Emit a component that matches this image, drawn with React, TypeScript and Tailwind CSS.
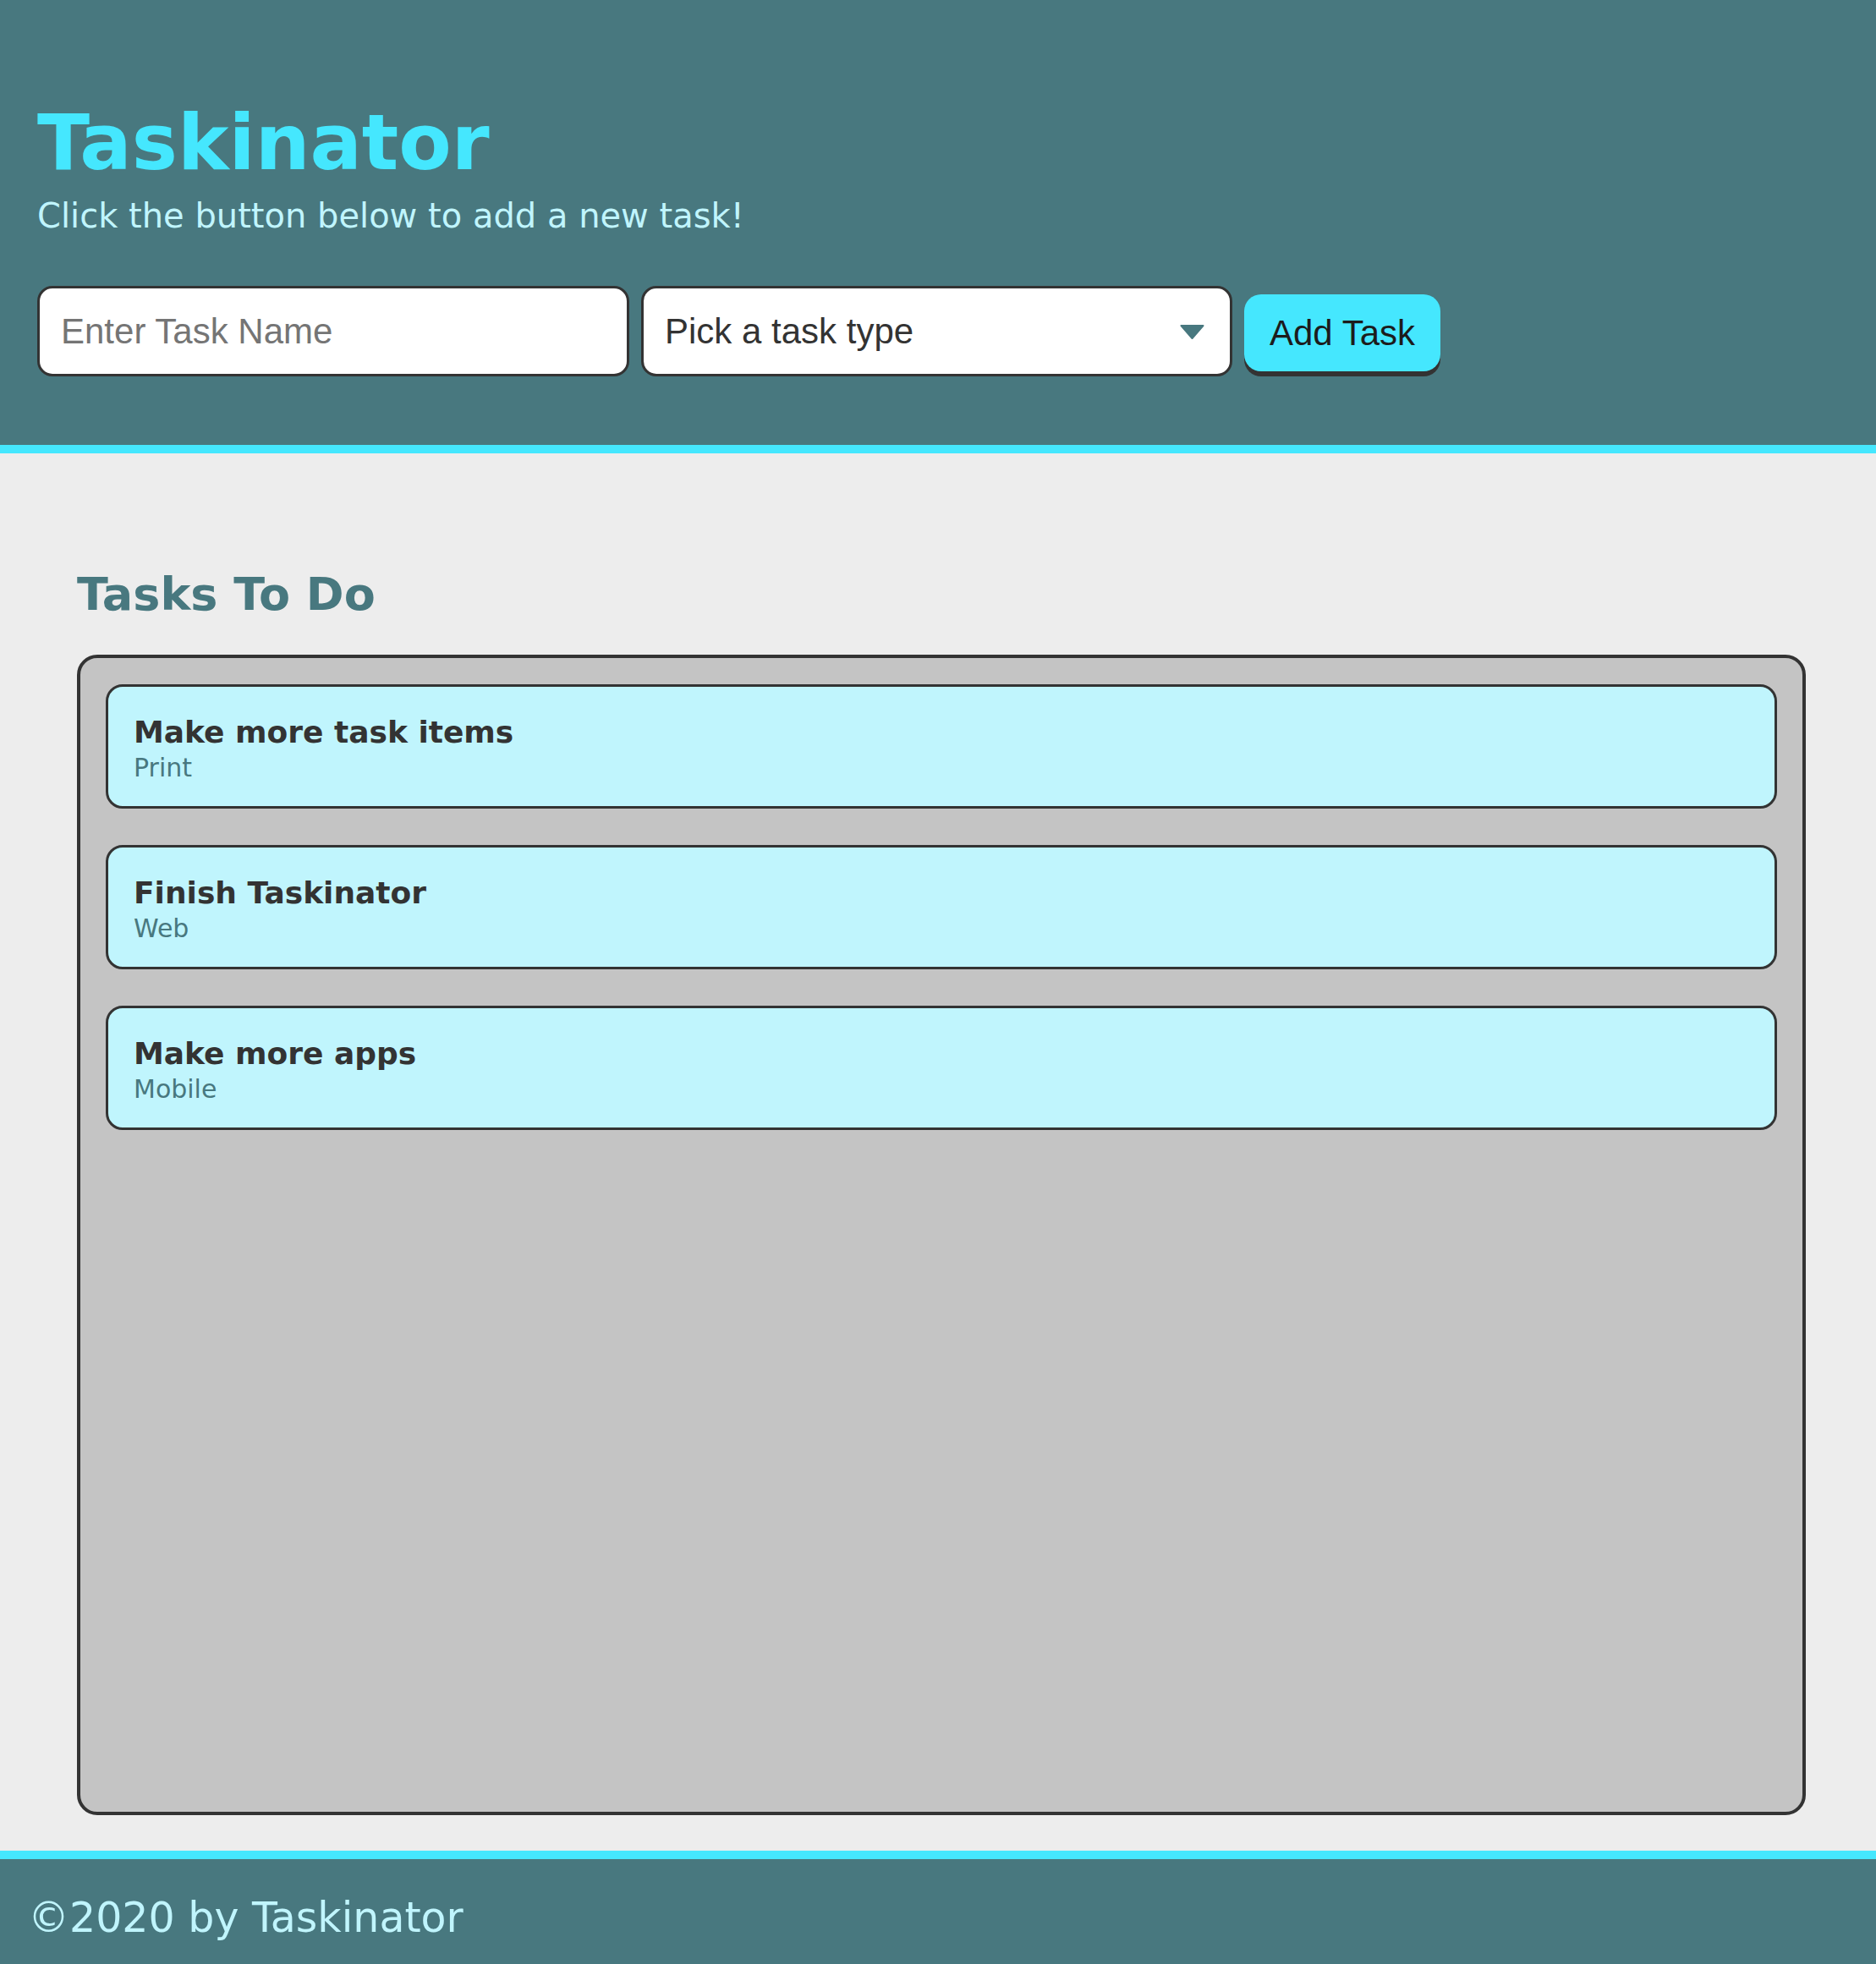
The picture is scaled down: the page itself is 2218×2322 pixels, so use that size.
import { useState } from 'react';

type Task = {
  name: string;
  type: string;
};

const tasks: Task[] = [
  { name: 'Make more task items', type: 'Print' },
  { name: 'Finish Taskinator', type: 'Web' },
  { name: 'Make more apps', type: 'Mobile' },
];

const sans = "font-['DejaVu_Sans',Verdana,sans-serif]";
const field = "font-['Liberation_Sans',Arial,sans-serif]";

function TaskItem({ task }: { task: Task }) {
  return (
    <li className="rounded-[20px] border-[3px] border-[#333333] bg-[#c0f5fd] px-[30px] pt-[33px] pb-[28px]">
      <h3 className={`${sans} text-[36px] leading-[41px] font-bold text-[#333333]`}>{task.name}</h3>
      <span className={`${sans} mt-[5px] block text-[30px] leading-[34px] text-[#48787f]`}>{task.type}</span>
    </li>
  );
}

export default function App() {
  const [name, setName] = useState('');
  const [type, setType] = useState('');

  return (
    <div className="flex min-h-screen flex-col bg-[#ededed]">
      <header className="border-b-[10px] border-[#45e7fe] bg-[#48787f] pt-[116px] pr-[44px] pb-[81px] pl-[44px]">
        <h1 className={`${sans} text-[91px] leading-[106px] font-bold text-[#45e7fe]`}>Taskinator</h1>
        <p className={`${sans} mt-[10px] text-[40px] leading-[47px] text-[#c0f5fd]`}>
          Click the button below to add a new task!
        </p>

        <form className="mt-[59px] flex items-end gap-[14px]" onSubmit={(e) => e.preventDefault()}>
          <input
            value={name}
            onChange={(e) => setName(e.target.value)}
            placeholder="Enter Task Name"
            className={`${field} h-[107px] w-[700px] rounded-[18px] border-[3px] border-[#333333] bg-white px-[25px] text-[42px] text-[#333333] outline-none placeholder:text-[#757575]`}
          />
          <div className="relative h-[107px] w-[699px]">
            <select
              value={type}
              onChange={(e) => setType(e.target.value)}
              className={`${field} h-full w-full appearance-none rounded-[18px] border-[3px] border-[#333333] bg-white px-[25px] text-[42px] text-[#333333] outline-none`}
            >
              <option value="" disabled>
                Pick a task type
              </option>
              <option value="Web">Web</option>
              <option value="Mobile">Mobile</option>
              <option value="Print">Print</option>
            </select>
            <svg
              className="pointer-events-none absolute top-[46px] right-[33px]"
              width="29"
              height="17"
              viewBox="0 0 29 17"
            >
              <path d="M1.5 1 L27.5 1 L14.5 16 Z" fill="#48787f" stroke="#48787f" strokeWidth="2" strokeLinejoin="round" />
            </svg>
          </div>
          <button
            type="submit"
            className={`${field} mb-[6px] h-[91px] rounded-[20px] bg-[#45e7fe] px-[30px] text-[42px] text-[#1c1c1c] shadow-[0_6px_0_#333333]`}
          >
            Add Task
          </button>
        </form>
      </header>

      <main className="flex-1 pt-[136px] pr-[83px] pb-[42px] pl-[91px]">
        <h2 className={`${sans} text-[54px] leading-[62px] font-bold text-[#48787f]`}>Tasks To Do</h2>
        <ul className="mt-[40px] flex min-h-[1372px] flex-col gap-[43px] rounded-[24px] border-4 border-[#333333] bg-[#c4c4c4] px-[30px] pt-[31px] pb-[30px]">
          {tasks.map((t) => (
            <TaskItem key={t.name} task={t} />
          ))}
        </ul>
      </main>

      <footer className="border-t-[10px] border-[#45e7fe] bg-[#48787f] pt-[41px] pb-[26px] pl-[33px]">
        <h3 className={`${sans} text-[49px] leading-[57px] text-[#c0f5fd]`}>©2020 by Taskinator</h3>
      </footer>
    </div>
  );
}
